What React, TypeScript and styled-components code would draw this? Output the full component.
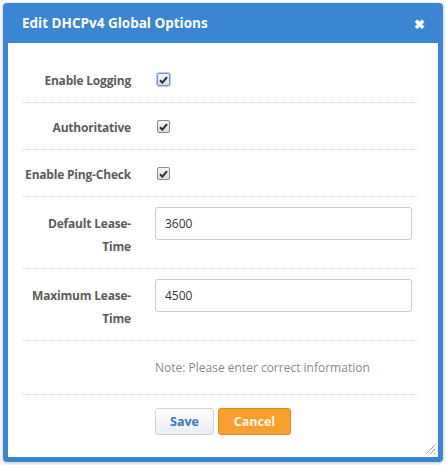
import React from "react";
import styled, { createGlobalStyle } from "styled-components";

const GlobalStyle = createGlobalStyle`
  html, body {
    margin: 0;
    padding: 0;
    background: #ffffff;
  }
  body {
    font-family: "Open Sans", "Noto Sans", Arial, sans-serif;
  }
`;

const Page = styled.div`
  padding: 3px;
  width: 440px;
`;

const Dialog = styled.div`
  position: relative;
  width: 440px;
  height: 459px;
  box-sizing: border-box;
  background: #3a86d2;
  border-radius: 4px;
  padding: 0 5px 5px;
  display: flex;
  flex-direction: column;
  box-shadow: 0 1px 4px rgba(0, 0, 0, 0.25);
`;

const Header = styled.div`
  height: 40px;
  display: flex;
  align-items: center;
  justify-content: space-between;
  padding: 0 13px 0 14px;
  color: #fff;
`;

const Title = styled.div`
  font-size: 13.5px;
  font-weight: 700;
`;

const Close = styled.div`
  font-size: 13px;
  font-weight: 700;
  line-height: 1;
  margin-top: 2px;
`;

const Body = styled.div`
  flex: 1;
  background: #fff;
  padding: 13px 20px 0 15px;
  display: flex;
  flex-direction: column;
`;

const Row = styled.div`
  display: grid;
  grid-template-columns: 108px 1fr;
  align-items: start;
  column-gap: 24px;
  padding: 10px 6px 10px 0;
  border-bottom: 1px dotted #d4d4d4;
`;

const Label = styled.div<{ $offset: number }>`
  padding-top: ${(p) => p.$offset}px;
  text-align: right;
  font-size: 12px;
  font-weight: 700;
  line-height: 23px;
  color: #5b5b5b;
  letter-spacing: -0.2px;
`;

const Control = styled.div<{ $height?: number }>`
  display: flex;
  align-items: center;
  height: ${(p) => (p.$height ? `${p.$height}px` : "auto")};
`;

const CheckBox = styled.span<{ $focus?: boolean }>`
  margin-left: 2px;
  margin-top: 1px;
  width: 13px;
  height: 13px;
  box-sizing: border-box;
  border: 1px solid ${(p) => (p.$focus ? "#6f95d4" : "#8a8a8a")};
  border-radius: 2px;
  background: linear-gradient(#f4f4f4, #dcdcdc);
  box-shadow: ${(p) => (p.$focus ? "0 0 0 1px #b9cdef" : "none")};
  display: flex;
  align-items: center;
  justify-content: center;
`;

const TextInput = styled.input`
  width: 257px;
  height: 33px;
  box-sizing: border-box;
  border: 1px solid #cccccc;
  border-radius: 3px;
  padding: 0 9px;
  font-family: inherit;
  font-size: 12px;
  color: #333;
  outline: none;
`;

const Note = styled.div`
  font-size: 12px;
  color: #8a8a8a;
  height: 33px;
  line-height: 33px;
`;

const Footer = styled.div`
  display: flex;
  gap: 4px;
  padding: 13px 0 0 132px;
`;

const Button = styled.button<{ $primary?: boolean }>`
  height: 27px;
  box-sizing: border-box;
  padding: 0;
  width: ${(p) => (p.$primary ? "73px" : "59px")};
  border-radius: 3px;
  font-family: inherit;
  font-size: 12.5px;
  font-weight: 700;
  cursor: pointer;
  border: 1px solid ${(p) => (p.$primary ? "#e3891f" : "#cfd4da")};
  color: ${(p) => (p.$primary ? "#fff7ea" : "#3c76c0")};
  background: ${(p) =>
    p.$primary ? "#f7a02f" : "linear-gradient(#ffffff, #e9eef3)"};
`;

const Grip = styled.svg`
  position: absolute;
  right: 7px;
  bottom: 7px;
`;

const Check = () => (
  <svg width="9" height="8" viewBox="0 0 9 8">
    <path d="M1 4.2 L3.4 6.6 L8 1.2" stroke="#2b2b2b" strokeWidth="2" fill="none" />
  </svg>
);

const checkRows = [
  { label: "Enable Logging", focus: true },
  { label: "Authoritative", focus: false },
  { label: "Enable Ping-Check", focus: false },
];

const inputRows = [
  { label: "Default Lease-Time", value: "3600" },
  { label: "Maximum Lease-Time", value: "4500" },
];

export default function App() {
  return (
    <Page>
      <GlobalStyle />
      <Dialog>
        <Header>
          <Title>Edit DHCPv4 Global Options</Title>
          <Close>✖</Close>
        </Header>
        <Body>
          {checkRows.map((r) => (
            <Row key={r.label}>
              <Label $offset={3}>{r.label}</Label>
              <Control $height={26}>
                <CheckBox $focus={r.focus}>
                  <Check />
                </CheckBox>
              </Control>
            </Row>
          ))}
          {inputRows.map((r) => (
            <Row key={r.label}>
              <Label $offset={5}>{r.label}</Label>
              <Control>
                <TextInput defaultValue={r.value} />
              </Control>
            </Row>
          ))}
          <Row>
            <div />
            <Note>Note: Please enter correct information</Note>
          </Row>
          <Footer>
            <Button>Save</Button>
            <Button $primary>Cancel</Button>
          </Footer>
        </Body>
        <Grip width="12" height="12" viewBox="0 0 12 12">
          <path d="M11 2 L2 11 M11 6 L6 11 M11 10 L10 11" stroke="#9a9a9a" strokeWidth="1" />
        </Grip>
      </Dialog>
    </Page>
  );
}
